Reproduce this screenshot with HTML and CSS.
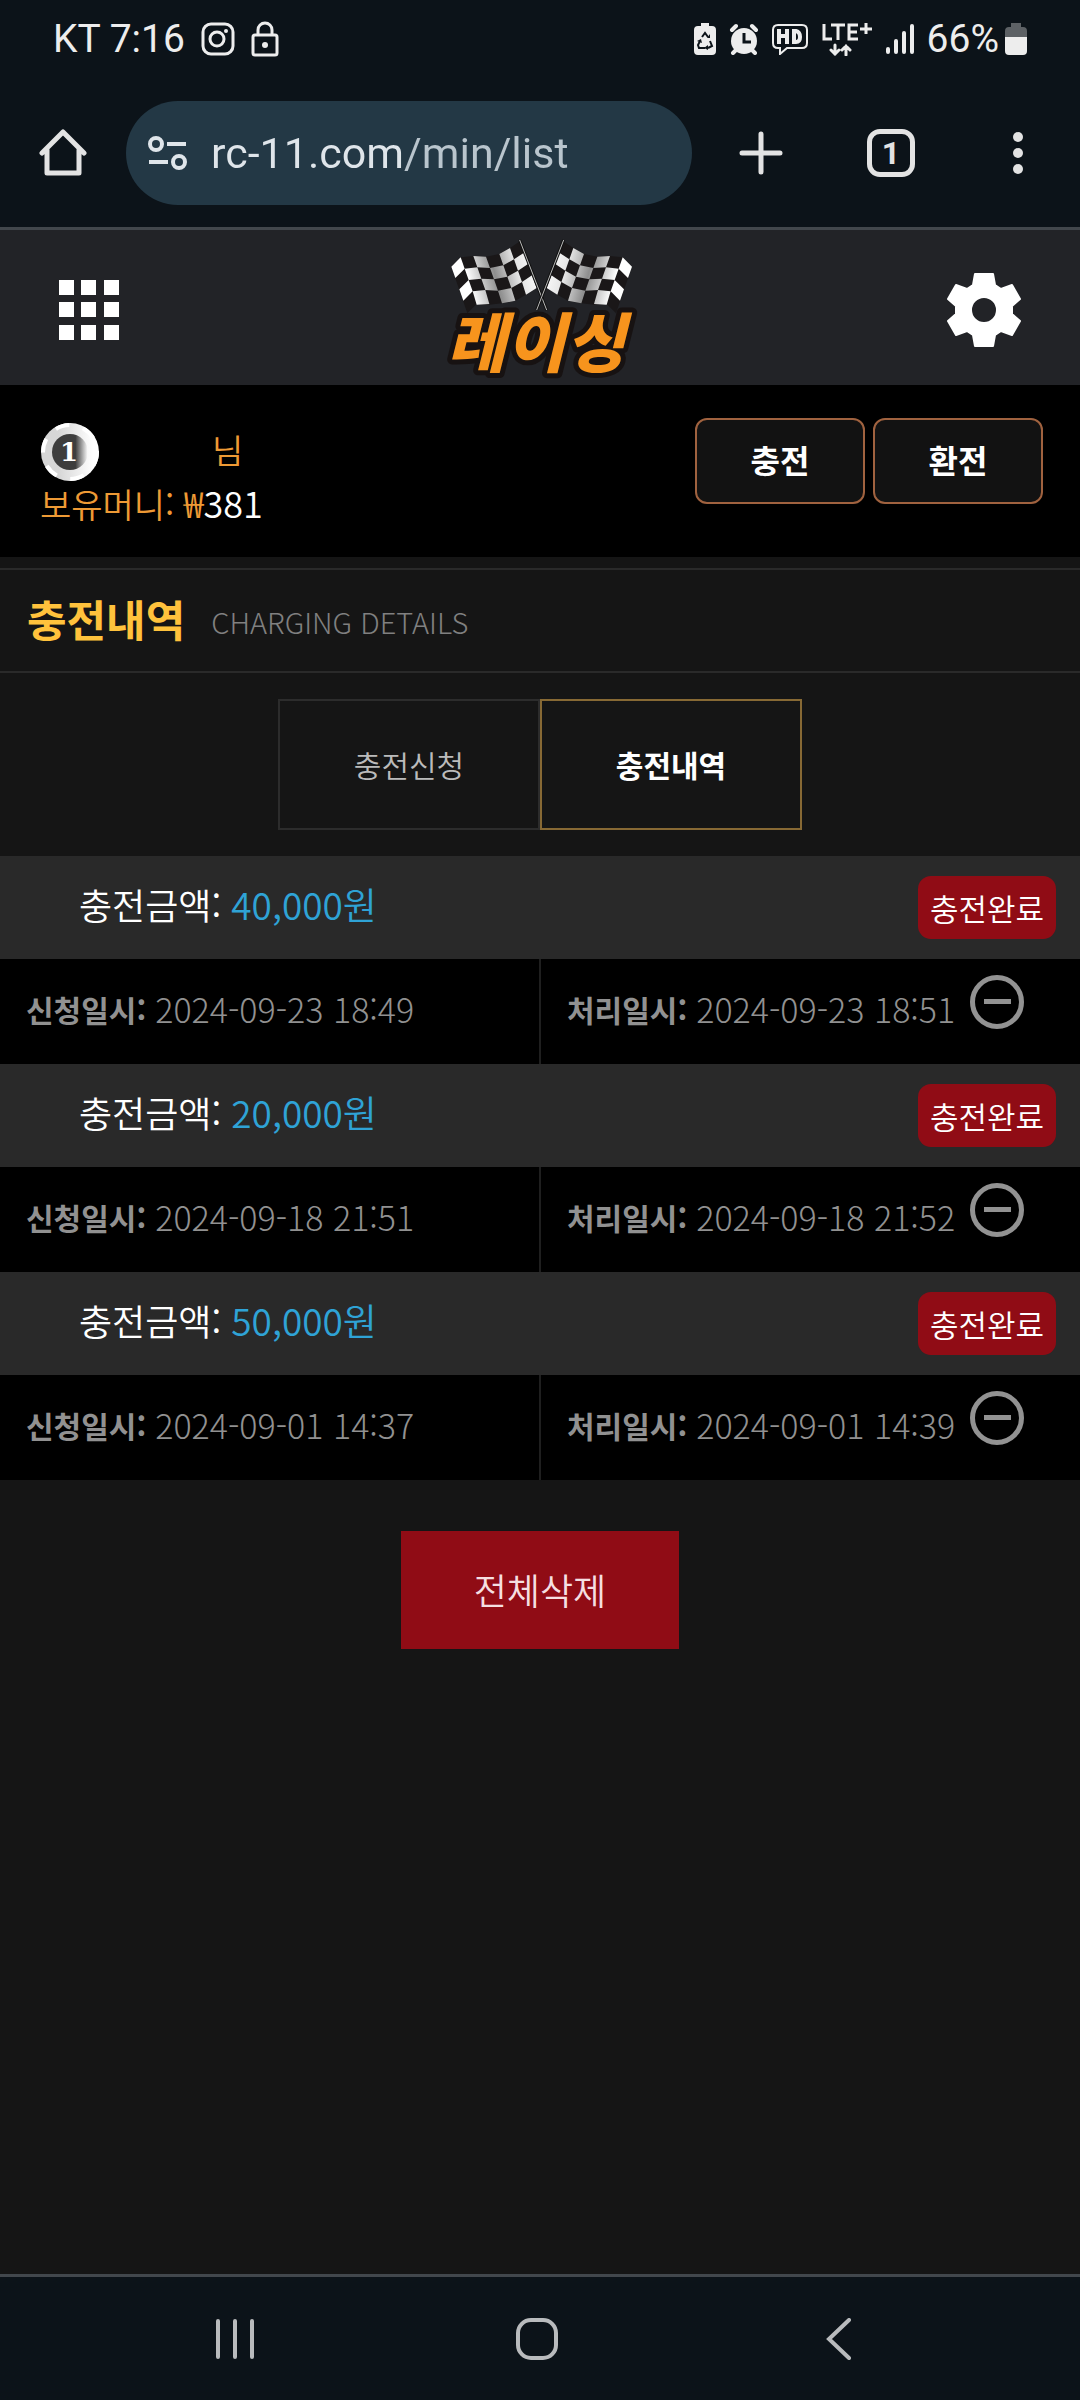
FILE: index.html
```html
<!DOCTYPE html>
<html lang="ko">
<head>
<meta charset="utf-8"/>
<meta name="viewport" content="width=device-width"/>
<title>충전내역</title>
<link rel="stylesheet" href="styles.css">
</head>
<body>
  <div class="status">
    <span>KT 7:16</span>
    <svg class="s_insta" width="34" height="34" viewBox="0 0 34 34" fill="none" stroke="#ededed" stroke-width="3">
      <rect x="2" y="2" width="30" height="30" rx="8"/>
      <circle cx="16" cy="17" r="7"/>
      <circle cx="25" cy="9" r="2" fill="#ededed" stroke="none"/>
    </svg>
    <svg class="s_lock" width="28" height="36" viewBox="0 0 28 36" fill="none" stroke="#ededed" stroke-width="3">
      <rect x="2" y="14" width="24" height="20" rx="2"/>
      <path d="M7 14V9a7 7 0 0 1 14 0v5"/>
      <circle cx="14" cy="24" r="3" fill="#ededed" stroke="none"/>
    </svg>
    <div class="status_right">
      <svg width="24" height="34" viewBox="0 0 24 34">
        <path fill="#ededed" d="M8 1h8v3h3q4 0 4 4v21q0 4-4 4H5q-4 0-4-4V8q0-4 4-4h3z"/>
        <path fill="none" stroke="#0c1319" stroke-width="2" d="M9 15l3-4 3 4M17 19l2 5-4 2M12 26H6l-1-3 2-4"/>
        <path fill="#0c1319" d="M14 16l3 0 0-4zM15 23v5l-4-2zM4 19l4-2 1 4z"/>
      </svg>
      <svg width="30" height="32" viewBox="0 0 30 32">
        <circle cx="15" cy="18" r="13" fill="#ededed"/>
        <path stroke="#ededed" stroke-width="4" stroke-linecap="round" d="M3 7l4-4M27 7l-4-4M7 27l-3 3M23 27l3 3"/>
        <path fill="none" stroke="#0c1319" stroke-width="3" d="M15 10v9h7"/>
      </svg>
      <svg width="38" height="32" viewBox="0 0 38 32">
        <path fill="none" stroke="#ededed" stroke-width="2" d="M7 2h24q5 0 5 5v13q0 5-5 5H16l-7 6v-6H7q-5 0-5-5V7q0-5 5-5z"/>
        <path fill="none" stroke="#ededed" stroke-width="4" d="M8 6v15M16 6v15M8 13h8M23 8v11h2q4 0 4-5t-4-6z"/>
      </svg>
      <svg width="52" height="34" viewBox="0 0 52 34" fill="none" stroke="#ededed" stroke-width="3">
        <path d="M3 2v15h8M10 3h14M17 3v15M37 3H28v14h9M28 10h8M45 1v11M39 7h12"/>
        <path stroke-width="3" stroke-linecap="round" d="M14 23v9M10 28l4 4 4-4M25 33v-9M21 28l4-4 4 4"/>
      </svg>
      <svg width="30" height="32" viewBox="0 0 30 32" stroke="#ededed" stroke-width="4" stroke-linecap="round">
        <path d="M3 26v3M11 18v11M19 10v19M27 3v26"/>
      </svg>
      <span>66%</span>
      <svg class="s_battery" width="22" height="34" viewBox="0 0 22 34">
        <path fill="#5d6165" d="M6 1h10v4h2q4 0 4 4v7H0V9q0-4 4-4h2z"/>
        <path fill="#ededed" d="M0 15h22v14q0 4-4 4H4q-4 0-4-4z"/>
      </svg>
    </div>
  </div>

  <div class="toolbar">
    <button class="tool tool_home" aria-label="홈">
      <svg width="48" height="48" viewBox="0 0 48 48" fill="none" stroke="#e3e3e3" stroke-width="5" stroke-linecap="round" stroke-linejoin="round">
        <path d="M3 24L24 3l21 21M8 21v23h32V21"/>
      </svg>
    </button>
    <div class="omnibox">
      <svg width="40" height="34" viewBox="0 0 40 34" fill="none" stroke="#dfe5ea" stroke-width="4">
        <circle cx="8" cy="8" r="6"/>
        <circle cx="31" cy="26" r="6"/>
        <path d="M19 8h19M1 26h19"/>
      </svg>
      <input class="url" type="text" value="rc-11.com/min/list" aria-label="주소"/>
    </div>
    <button class="tool" aria-label="새 탭">
      <svg width="44" height="44" viewBox="0 0 44 44" stroke="#e3e3e3" stroke-width="5" stroke-linecap="round">
        <path d="M22 3v38M3 22h38"/>
      </svg>
    </button>
    <button class="tool" aria-label="탭"><span class="tab_count">1</span></button>
    <button class="tool tool_menu" aria-label="메뉴">
      <svg width="12" height="44" viewBox="0 0 12 44" fill="#e3e3e3">
        <circle cx="6" cy="6" r="5"/>
        <circle cx="6" cy="22" r="5"/>
        <circle cx="6" cy="38" r="5"/>
      </svg>
    </button>
  </div>

  <header class="header">
    <button class="header_btn" aria-label="전체메뉴">
      <svg width="60" height="60" viewBox="0 0 60 60" fill="#fff">
        <path d="M0 0h15v15H0zM22 0h15v15H22zM45 0h15v15H45zM0 22h15v15H0zM22 22h15v15H22zM45 22h15v15H45zM0 45h15v15H0zM22 45h15v15H22zM45 45h15v15H45z"/>
      </svg>
    </button>
    <a class="logo" href="#" aria-label="레이싱">
      <svg class="logo_svg" width="220" height="155" viewBox="0 0 660 465">
        <defs>
          <linearGradient id="shade" gradientUnits="userSpaceOnUse" x1="60" y1="150" x2="320" y2="80">
            <stop offset="0" stop-color="#fff"/>
            <stop offset="0.2" stop-color="#fff"/>
            <stop offset="0.5" stop-color="#8e8e8e"/>
            <stop offset="0.75" stop-color="#e4e4e4"/>
            <stop offset="1" stop-color="#fff"/>
          </linearGradient>
          <g id="flag">
            <path fill="#1a1718" d="M64 110L92 82 130 78 168 80 208 72 240 54 270 34 320 174 288 194 256 212 216 220 178 224 140 222 112 250z"/>
            <g fill="url(#shade)">
              <path d="M64 110L92 82l12 34-28 28zM130 78L168 80l12 34-38-2zM208 72L240 54l12 34-32 18z"/>
              <path d="M104 116L142 112l12 34-38 4zM180 114L220 106l12 34-40 8zM252 88L282 68l12 34-30 20z"/>
              <path d="M88 178L116 150l12 34-28 28zM154 146L192 148l12 34-38-2zM232 140L264 122l12 34-32 18z"/>
              <path d="M128 184L166 180l12 42-38 2zM204 182L244 174l12 38-40 8zM276 156L306 136l14 38-32 20z"/>
            </g>
            <path stroke="#111" stroke-width="9" d="M269 30L350 240"/>
            <path stroke="#bbb" stroke-width="3" d="M269 30L350 240"/>
          </g>
        </defs>
        <use href="#flag"/>
        <use href="#flag" transform="translate(670 0) scale(-1 1)"/>
        <text class="logo_text" x="317" y="412" text-anchor="middle">레이싱</text>
      </svg>
    </a>
    <button class="header_btn" aria-label="설정">
      <svg width="74" height="74" viewBox="0 0 74 74">
        <path fill="#fff" fill-rule="evenodd" stroke="#fff" stroke-width="2" stroke-linejoin="round" d="M28 1h18l2 11 6 4 11-4 8 14-8 7v8l8 7-8 14-11-4-6 4-2 11H28l-2-11-6-4-11 4-8-14 8-7v-8l-8-7 8-14 11 4 6-4zM37 24a13 13 0 1 0 0 26 13 13 0 1 0 0-26z"/>
      </svg>
    </button>
  </header>

  <section class="user">
    <div class="user_info">
      <div class="user_name">
        <svg width="60" height="60" viewBox="0 0 60 60">
          <defs>
            <linearGradient id="chip">
              <stop offset="0.65" stop-color="#3d3d3d"/>
              <stop offset="1" stop-color="#fff"/>
            </linearGradient>
            <linearGradient id="rim">
              <stop offset="0.3" stop-color="#d6d6d6"/>
              <stop offset="0.9" stop-color="#fff"/>
            </linearGradient>
          </defs>
          <circle cx="30" cy="30" r="29" fill="url(#rim)"/>
          <circle cx="30" cy="30" r="27" fill="none" stroke="#fff" stroke-width="4" stroke-dasharray="14 14"/>
          <circle cx="30" cy="30" r="18" fill="url(#chip)"/>
          <text class="chip_num" x="29" y="39" text-anchor="middle">1</text>
        </svg>
        <span>님</span>
      </div>
      <div>보유머니: <span class="money_num">₩<span class="money">381</span></span></div>
    </div>
    <div class="user_btns">
      <button class="user_btn">충전</button>
      <button class="user_btn">환전</button>
    </div>
  </section>

  <div class="title">
    <h1>충전내역</h1>
    <span>CHARGING DETAILS</span>
  </div>

  <nav class="tabs">
    <a class="tab" href="#">충전신청</a>
    <a class="tab tab_on" href="#">충전내역</a>
  </nav>

  <ul class="list">
    <li>
      <div class="amount">
        <span class="amount_text">충전금액: <span class="won">40,000원</span></span>
        <span class="badge">충전완료</span>
      </div>
      <div class="dates">
        <div class="date"><b>신청일시:</b> <time>2024-09-23 18:49</time></div>
        <div class="date"><b>처리일시:</b> <time>2024-09-23 18:51</time>
          <button class="del" aria-label="삭제"></button>
        </div>
      </div>
    </li>
    <li>
      <div class="amount">
        <span class="amount_text">충전금액: <span class="won">20,000원</span></span>
        <span class="badge">충전완료</span>
      </div>
      <div class="dates">
        <div class="date"><b>신청일시:</b> <time>2024-09-18 21:51</time></div>
        <div class="date"><b>처리일시:</b> <time>2024-09-18 21:52</time>
          <button class="del" aria-label="삭제"></button>
        </div>
      </div>
    </li>
    <li>
      <div class="amount">
        <span class="amount_text">충전금액: <span class="won">50,000원</span></span>
        <span class="badge">충전완료</span>
      </div>
      <div class="dates">
        <div class="date"><b>신청일시:</b> <time>2024-09-01 14:37</time></div>
        <div class="date"><b>처리일시:</b> <time>2024-09-01 14:39</time>
          <button class="del" aria-label="삭제"></button>
        </div>
      </div>
    </li>
  </ul>

  <button class="del_all">전체삭제</button>

  <div class="navbar">
    <button aria-label="최근 앱">
      <svg width="40" height="42" viewBox="0 0 40 42" stroke="#b9bbbd" stroke-width="4" stroke-linecap="round">
        <path d="M3 3v36M20 3v36M37 3v36"/>
      </svg>
    </button>
    <button aria-label="홈 화면">
      <svg width="42" height="42" viewBox="0 0 42 42" fill="none" stroke="#b9bbbd" stroke-width="4">
        <rect x="2" y="2" width="38" height="38" rx="13"/>
      </svg>
    </button>
    <button aria-label="뒤로">
      <svg width="26" height="42" viewBox="0 0 26 42" fill="none" stroke="#b9bbbd" stroke-width="4" stroke-linecap="round">
        <path d="M23 2L3 21l20 19"/>
      </svg>
    </button>
  </div>
</body>
</html>
```
FILE: styles.css
```css
*{
  padding:0;
  margin:0;
  box-sizing:border-box;
}
body{
  min-height:100vh;
  display:flex;
  flex-direction:column;
  background-color:#151515;
  color:#fff;
  font-family:"Noto Sans CJK KR",sans-serif;
  font-weight:350;
}
button{
  border:none;
  background:none;
  color:inherit;
  font-family:inherit;
}
svg{
  display:block;
  flex:none;
}
a{
  color:inherit;
  text-decoration:none;
}
/* 상태바 */
.status{
  display:flex;
  align-items:center;
  height:78px;
  padding:0 53px;
  background-color:#0c1319;
  color:#ededed;
  font-family:Roboto,sans-serif;
  font-size:39px;
  font-weight:400;
}
.s_insta,
.s_lock{
  margin-left:16px;
}
.status_right{
  display:flex;
  align-items:center;
  gap:12px;
  margin-left:auto;
}
.s_battery{
  margin-left:-6px;
}
/* 주소창 */
.toolbar{
  display:flex;
  align-items:center;
  height:152px;
  background-color:#0c1319;
  border-bottom:3px solid #42474c;
}
.tool{
  display:flex;
  align-items:center;
  justify-content:center;
  width:130px;
  height:104px;
}
.tool_home{
  width:126px;
}
.tool_menu{
  width:124px;
}
.omnibox{
  flex:1;
  display:flex;
  align-items:center;
  gap:23px;
  min-width:0;
  height:104px;
  margin-right:4px;
  padding:0 22px;
  border-radius:52px;
  background-color:#233845;
}
.url{
  flex:1;
  min-width:0;
  height:64px;
  border:none;
  outline:none;
  /* 도메인은 밝게, 경로는 어둡게 */
  background-image:linear-gradient(90deg,#dfe5ea 192px,#b9c5cd 192px);
  background-clip:text;
  -webkit-background-clip:text;
  color:transparent;
  font-family:Roboto,sans-serif;
  font-size:43px;
}
.tab_count{
  width:48px;
  height:48px;
  border:5px solid #e3e3e3;
  border-radius:13px;
  color:#e3e3e3;
  font:700 32px/38px Roboto,sans-serif;
  text-align:center;
}
/* 헤더 */
.header{
  display:flex;
  align-items:center;
  justify-content:space-between;
  height:155px;
  padding:0 59px;
  background-color:#222327;
}
.header_btn{
  width:74px;
  padding-top:5px;
}
.logo_svg{
  overflow:visible;
}
.logo_text{
  fill:#f7941d;
  stroke:#171212;
  stroke-width:30px;
  stroke-linejoin:round;
  paint-order:stroke;
  font-size:194px;
  font-weight:900;
  font-style:italic;
}
.user{
  display:flex;
  justify-content:space-between;
  align-items:flex-start;
  height:172px;
  padding:33px 37px 0 40px;
  background-color:#000;
}
.user_info{
  color:#ee9a35;
  font-size:34px;
  line-height:32px;
}
.user_name{
  display:flex;
  align-items:center;
  gap:112px;
  height:68px;
}
.user_name span{
  padding-bottom:4px;
}
.chip_num{
  fill:#fff;
  font:700 26px "DejaVu Serif",serif;
}
.money_num{
  font-size:36px;
}
.money{
  color:#fff;
}
.user_btns{
  display:flex;
  gap:8px;
}
.user_btn{
  width:170px;
  height:86px;
  padding-bottom:5px;
  border:2px solid #a0623f;
  border-radius:12px;
  background-color:#121212;
  font-size:32px;
  font-weight:700;
}
/* 타이틀 */
.title{
  display:flex;
  align-items:center;
  gap:26px;
  height:105px;
  margin-top:11px;
  padding:0 27px 5px;
  border-top:2px solid #2a2a2a;
  border-bottom:2px solid #2a2a2a;
}
.title h1{
  color:#ffc23c;
  font-size:43px;
  font-weight:700;
}
.title span{
  padding-top:6px;
  color:#808080;
  font-size:29px;
  font-weight:300;
}
.tabs{
  display:flex;
  justify-content:center;
  margin:26px 0;
}
.tab{
  width:262px;
  height:131px;
  border:2px solid #2c2c2c;
  color:#bbb;
  font-size:30px;
  line-height:127px;
  text-align:center;
}
.tab_on{
  border-color:#876934;
  color:#fff;
  font-weight:700;
}
/* 충전내역 리스트 */
.list{
  list-style:none;
}
.amount{
  display:flex;
  align-items:center;
  justify-content:space-between;
  height:103px;
  padding:0 24px 0 79px;
  background-color:#292929;
}
.amount_text{
  padding-bottom:8px;
  font-size:36px;
}
.won{
  color:#2fa3d6;
  font-size:37px;
}
.badge{
  padding:0 12px;
  border-radius:13px;
  background-color:#900c15;
  font-size:31px;
  line-height:63px;
}
.dates{
  display:flex;
  height:105px;
  background-color:#000;
}
.date{
  flex:1;
  display:flex;
  align-items:center;
  gap:9px;
  padding:0 0 6px 26px;
  color:#919191;
  font-size:34px;
  font-weight:300;
  white-space:nowrap;
}
.date + .date{
  border-left:2px solid #1f1f1f;
}
.date b{
  font-size:30px;
  font-weight:700;
}
.del{
  width:54px;
  height:54px;
  margin:0 0 14px 6px;
  border:5px solid #929292;
  border-radius:50%;
}
.del::after{
  content:"";
  display:block;
  width:27px;
  height:5px;
  margin:0 auto;
  background-color:#929292;
}
.del_all{
  width:278px;
  height:118px;
  margin:51px auto;
  padding-bottom:2px;
  background-color:#900c15;
  color:#f5dfe1;
  font-size:36px;
  font-weight:350;
}
/* 하단바 */
.navbar{
  display:flex;
  height:126px;
  margin-top:auto;
  padding:0 90px 0 84px;
  border-top:3px solid #42474c;
  background-color:#0c1319;
}
.navbar button{
  flex:1;
  display:flex;
  align-items:center;
  justify-content:center;
}
```
